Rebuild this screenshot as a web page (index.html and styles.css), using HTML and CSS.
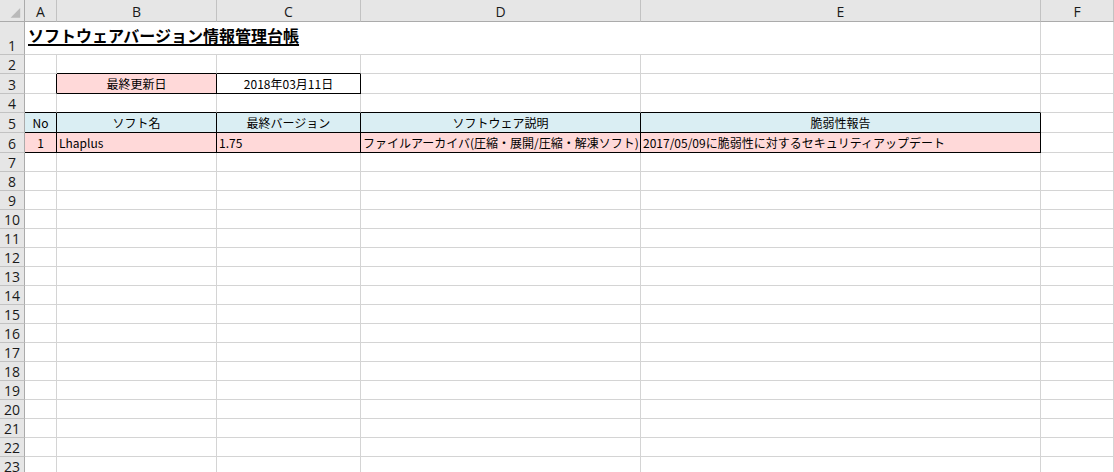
FILE: index.html
```html
<!DOCTYPE html>
<html lang="ja">
<head>
    <meta charset="UTF-8">
    <meta name="viewport" content="width=device-width, initial-scale=1.0">
    <title>ソフトウェアバージョン情報管理台帳</title>
    <link rel="stylesheet" href="styles.css">
</head>
<body>
    <div class="sheet" id="sheet">
        <!-- column headers -->
        <div class="head corner">
            <svg width="25" height="22" viewBox="0 0 25 22"><polygon points="11,18 21,18 21,8" fill="#b9b9b9"/></svg>
        </div>
        <div class="head">A</div>
        <div class="head">B</div>
        <div class="head">C</div>
        <div class="head">D</div>
        <div class="head">E</div>
        <div class="head">F</div>

        <!-- 1 -->
        <div class="head row-head">1</div>
        <div class="cell title span-5"><span>ソフトウェアバージョン情報管理台帳</span></div>
        <div class="cell"></div>

        <!-- 2 -->
        <div class="head row-head">2</div>
        <div class="cell"></div>
        <div class="cell kb"></div>
        <div class="cell kb"></div>
        <div class="cell"></div>
        <div class="cell"></div>
        <div class="cell"></div>

        <!-- 3 -->
        <div class="head row-head">3</div>
        <div class="cell kr"></div>
        <div class="cell pink kr kb ctr">最終更新日</div>
        <div class="cell kr kb ctr">2018年03月11日</div>
        <div class="cell"></div>
        <div class="cell"></div>
        <div class="cell"></div>

        <!-- 4 -->
        <div class="head row-head">4</div>
        <div class="cell kb"></div>
        <div class="cell kb"></div>
        <div class="cell kb"></div>
        <div class="cell kb"></div>
        <div class="cell kb"></div>
        <div class="cell"></div>

        <!-- 5 -->
        <div class="head row-head">5</div>
        <div class="cell blue kr kb ctr">No</div>
        <div class="cell blue kr kb ctr">ソフト名</div>
        <div class="cell blue kr kb ctr">最終バージョン</div>
        <div class="cell blue kr kb ctr">ソフトウェア説明</div>
        <div class="cell blue kr kb ctr">脆弱性報告</div>
        <div class="cell"></div>

        <!-- 6 -->
        <div class="head row-head">6</div>
        <div class="cell pink kr kb ctr">1</div>
        <div class="cell pink kr kb">Lhaplus</div>
        <div class="cell pink kr kb">1.75</div>
        <div class="cell pink kr kb">ファイルアーカイバ(圧縮・展開/圧縮・解凍ソフト)</div>
        <div class="cell pink kr kb">2017/05/09に脆弱性に対するセキュリティアップデート</div>
        <div class="cell"></div>
    </div>
    <script>
        // 空の行 7〜23
        let rows = '';
        for (let i = 7; i <= 23; i++) {
            rows += `<div class="head row-head">${i}</div>`;
            for (let c = 0; c < 6; c++) {
                rows += '<div class="cell"></div>';
            }
        }
        document.getElementById('sheet').insertAdjacentHTML('beforeend', rows);
    </script>
</body>
</html>
```

FILE: styles.css
```css
body {
    margin: 0;
    padding: 0;
    background: #fff;
    color: #000;
    font-family: "Noto Sans CJK JP", sans-serif;
    font-size: 12px;
    overflow: hidden;
}
* {box-sizing: border-box;}
.sheet {
    display: grid;
    grid-template-columns: 25px 32px 160px 144px 280px 400px 1fr;
    grid-template-rows: 22px 33px 19px 20px 19px 20px 20px;
    grid-auto-rows: 19px;
    height: 472px;
}
.head {
    display: flex;
    align-items: center;
    justify-content: center;
    background: #e6e6e6;
    border-right: 1px solid #c2c2c2;
    border-bottom: 1px solid #ababab;
    font-family: "Open Sans", sans-serif;
    font-size: 14px;
    line-height: 17px;
    color: #1a1a1a;
    padding-top: 1px;
}
.corner {
    padding: 0;
    border-right-color: #ababab;
}
.row-head {
    align-items: flex-end;
    padding-top: 0;
    border-right-color: #ababab;
    border-bottom-color: #c2c2c2;
}
.cell {
    display: flex;
    align-items: center;
    padding: 0 2px;
    border-right: 1px solid #d4d4d4;
    border-bottom: 1px solid #d4d4d4;
    line-height: 16px;
    white-space: nowrap;
    overflow: hidden;
}
.ctr {
    justify-content: center;
}
.kr {
    border-right-color: #000;
}
.kb {
    border-bottom-color: #000;
}
.pink {
    background: #ffd9d9;
}
.blue {
    background: #daeef3;
}
.span-5 {
    grid-column: span 5;
}
.title {
    align-items: flex-end;
    padding: 0 3px 11px;
    font-size: 16px;
    font-weight: bold;
}
.title span {
    text-decoration: underline;
    text-decoration-thickness: 2px;
    text-underline-offset: 2px;
}
```
